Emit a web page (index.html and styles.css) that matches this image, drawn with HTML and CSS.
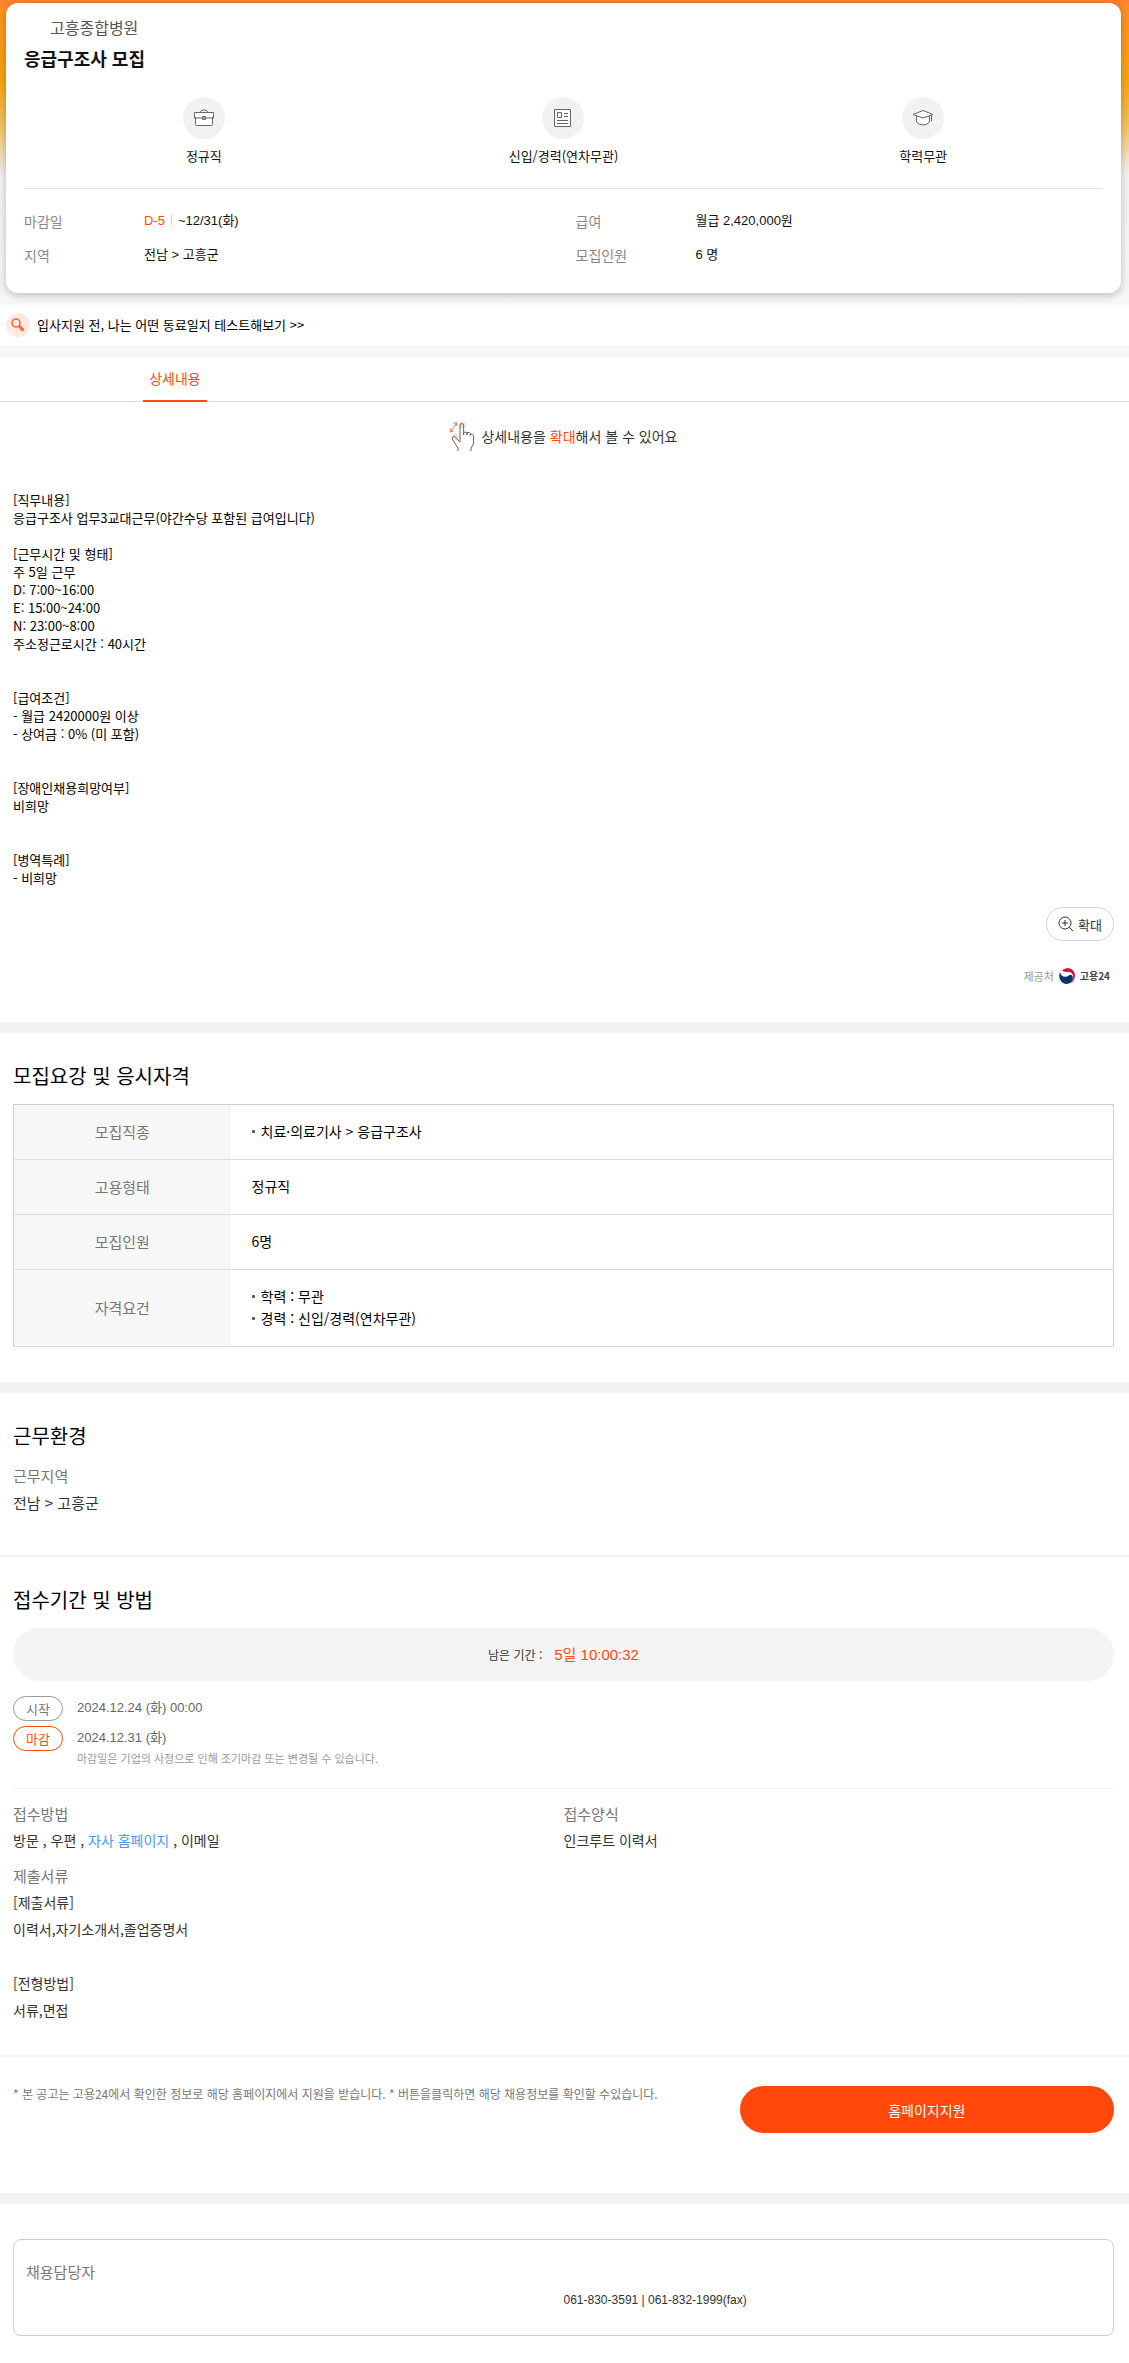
FILE: index.html
```html
<!DOCTYPE html>
<html lang="ko">
  <head>
    <meta charset="utf-8">
    <meta name="viewport" content="width=device-width, initial-scale=1">
    <title>응급구조사 모집 - 고흥종합병원</title>
    <link rel="stylesheet" href="styles.css">
  </head>
  <body>

    <header class="top">
      <div class="card">
        <p class="company">고흥종합병원</p>
        <h1>응급구조사 모집</h1>
        <ul class="keywords">
          <li>
            <span class="circle">
              <svg width="20" height="20" viewBox="0 0 20 20"><path d="M1.500 9v7.500q0 1 1 1h15q1 0 1-1v-7.500M.5 4.500h19v5.500h-19zM8.500 8.500h3v3h-3z"/><path d="M6.500 4.500q0-2.500 2.500-2.500h2q2.500 0 2.500 2.500" fill="none"/></svg>
            </span>
            정규직
          </li>
          <li>
            <span class="circle">
              <svg width="20" height="20" viewBox="0 0 20 20"><path d="M1.500 1.500h16v17h-16zM4.500 4.500h4v5h-4zM11 5.500h4M11 8.500h4M4 12.500h11M4 15.500h11"/></svg>
            </span>
            신입/경력(연차무관)
          </li>
          <li>
            <span class="circle">
              <svg width="22" height="20" viewBox="0 0 22 20"><path d="M4.500 8v6q2.500 3 6.500 3t6.500-3V8M11 2.500L21 6.500L11 10L1 6.500zM19.500 7.500v6"/></svg>
            </span>
            학력무관
          </li>
        </ul>
        <div class="summary">
          <dl>
            <dt>마감일</dt>
            <dd><span class="dday">D-5</span><span class="bar"></span>~12/31(화)</dd>
            <dt>지역</dt>
            <dd>전남 &gt; 고흥군</dd>
          </dl>
          <dl>
            <dt>급여</dt>
            <dd>월급 2,420,000원</dd>
            <dt>모집인원</dt>
            <dd>6 명</dd>
          </dl>
        </div>
      </div>
    </header>

    <a class="test" href="#">
      <span class="testIcon">
        <svg width="14" height="14" viewBox="0 0 14 14"><circle cx="5" cy="5" r="4"/><path d="M8 8L12.500 12.500" stroke-width="3"/></svg>
      </span>
      입사지원 전, 나는 어떤 동료일지 테스트해보기 &gt;&gt;
    </a>

    <nav class="tabs">
      <a class="on" href="#detail">상세내용</a>
    </nav>

    <section class="detail" id="detail">
      <p class="hint">
        <svg width="26" height="32" viewBox="0 0 26 32">
          <circle cx="13" cy="5" r="3.500" fill="#fbdccf"/>
          <circle cx="6" cy="17" r="3.500" fill="#fbdccf"/>
          <path d="M1.500 12L7.500 3M1.500 8.500V12l3-1M4.500 3.500l3-1v3.500" fill="none" stroke="#f47a4a"/>
          <path d="M9 31v-3L3.500 19.500q-1-2.500 1.500-3q1-.3 2 1.500l4 4V5.500q0-2 1.800-2t1.800 2V15V12.500q2.800-1 3.400.5v2V12.500q2.800-.5 3.400 1v2V14q2.600-.5 3.100 1.500V24L22 28v3" fill="none" stroke="#666"/>
        </svg>
        <span>상세내용을 <em>확대</em>해서 볼 수 있어요</span>
      </p>
      <div class="description">[직무내용]
응급구조사 업무3교대근무(야간수당 포함된 급여입니다)

[근무시간 및 형태]
주 5일 근무
D: 7:00~16:00
E: 15:00~24:00
N: 23:00~8:00
주소정근로시간 : 40시간


[급여조건]
- 월급 2420000원 이상
- 상여금 : 0% (미 포함)


[장애인채용희망여부]
비희망


[병역특례]
- 비희망</div>
      <button class="zoom" type="button">
        <svg width="16" height="16" viewBox="0 0 16 16"><circle cx="7" cy="7" r="6"/><path d="M4 7h6M7 4v6M11.300 11.300L15 15"/></svg>
        확대
      </button>
      <p class="provider">
        제공처
        <svg width="16" height="16" viewBox="0 0 16 16">
          <path d="M3 2.500Q5.500 0 9 0Q15 .8 16 7Q16 12 12 15.500Q14.800 11.500 14.300 8Q12.500 3.500 9 3.800Q5.500 4.500 3 2.500z" fill="#e4032e"/>
          <path d="M1 4Q2 8.500 6 8.800Q8.500 8.800 10 7.300Q12.800 6 13.700 8.500Q14.500 12 12 14.500Q8 17 4 15Q-1.500 11 1 4z" fill="#0c3467"/>
        </svg>
        <strong>고용24</strong>
      </p>
    </section>

    <section class="outline">
      <h2>모집요강 및 응시자격</h2>
      <table>
        <tr>
          <th scope="row">모집직종</th>
          <td><ul><li>치료·의료기사 &gt; 응급구조사</li></ul></td>
        </tr>
        <tr>
          <th scope="row">고용형태</th>
          <td>정규직</td>
        </tr>
        <tr>
          <th scope="row">모집인원</th>
          <td>6명</td>
        </tr>
        <tr>
          <th scope="row">자격요건</th>
          <td>
            <ul>
              <li>학력 : 무관</li>
              <li>경력 : 신입/경력(연차무관)</li>
            </ul>
          </td>
        </tr>
      </table>
    </section>

    <section class="place">
      <h2>근무환경</h2>
      <h3>근무지역</h3>
      <p>전남 &gt; 고흥군</p>
    </section>

    <section class="period">
      <h2>접수기간 및 방법</h2>
      <p class="remain"><span>남은 기간 :</span><strong>5일 10:00:32</strong></p>
      <ul class="dates">
        <li><span class="badge">시작</span><span class="date">2024.12.24 (화) 00:00</span></li>
        <li><span class="badge end">마감</span><span class="date">2024.12.31 (화)</span></li>
      </ul>
      <p class="notice">마감일은 기업의 사정으로 인해 조기마감 또는 변경될 수 있습니다.</p>
      <div class="how">
        <div>
          <h3>접수방법</h3>
          <p>방문 , 우편 , <a href="#">자사 홈페이지</a> , 이메일</p>
        </div>
        <div>
          <h3>접수양식</h3>
          <p>인크루트 이력서</p>
        </div>
      </div>
      <h3>제출서류</h3>
      <p>[제출서류]<br>이력서,자기소개서,졸업증명서<br><br>[전형방법]<br>서류,면접</p>
    </section>

    <section class="apply">
      <p>* 본 공고는 고용24에서 확인한 정보로 해당 홈페이지에서 지원을 받습니다. * 버튼을클릭하면 해당 채용정보를 확인할 수있습니다.</p>
      <button type="button">홈페이지지원</button>
    </section>

    <section class="contact">
      <div class="contactBox">
        <h3>채용담당자</h3>
        <p>061-830-3591 | 061-832-1999(fax)</p>
      </div>
    </section>

  </body>
</html>
```
FILE: styles.css
```css
* {
  box-sizing: border-box;
}
body {
  margin: 0;
  font-family: "Noto Sans CJK KR", sans-serif;
  font-size: 14px;
  color: #333;
  background: #fff;
}
h1, h2, h3, p, ul, dl, dd {
  margin: 0;
  padding: 0;
  font-weight: normal;
}
ul {
  list-style: none;
}
a {
  color: inherit;
  text-decoration: none;
}
em {
  font-style: normal;
  color: #ff4a0d;
}
svg {
  flex: none;
}
button {
  font-family: inherit;
  cursor: pointer;
}

/* top card */
.top {
  padding: 3px 8px 12px 6px;
  background: linear-gradient(#ff8230 3px, #ff9122 10px, #f8a60c 80px, #f3c262 125px, #f3f3f3 175px, #f7f7f7);
}
.card {
  height: 290px;
  padding: 12px 18px 0;
  background: #fff;
  border-radius: 12px;
  box-shadow: 0 2px 8px rgba(0, 0, 0, .25);
}
.company {
  padding-left: 26px;
  font-size: 16px;
  line-height: 24px;
  color: #555;
}
h1 {
  margin-top: 5px;
  font-size: 18px;
  font-weight: bold;
  line-height: 28px;
  color: #111;
}
.keywords {
  display: grid;
  grid-template-columns: repeat(3, 1fr);
  margin-top: 25px;
  padding-bottom: 22px;
  border-bottom: 1px solid #e0e0e0;
}
.keywords li {
  display: flex;
  flex-direction: column;
  align-items: center;
  gap: 6px;
  font-size: 13px;
  line-height: 21px;
  color: #111;
}
.circle {
  display: flex;
  align-items: center;
  justify-content: center;
  width: 42px;
  height: 42px;
  border-radius: 50%;
  background: #f1f1f1;
}
.circle svg {
  fill: #fff;
  stroke: #666;
}
.summary {
  display: grid;
  grid-template-columns: 1fr 1fr;
  gap: 24px;
  margin-top: 15px;
}
.summary dl {
  display: grid;
  grid-template-columns: 120px 1fr;
  line-height: 34px;
}
.summary dt {
  color: #888;
}
.summary dd {
  font-family: "Liberation Sans", "Noto Sans CJK KR", sans-serif;
  font-size: 13px;
  color: #111;
}
.dday {
  color: #ff4a0d;
}
.bar {
  display: inline-block;
  width: 1px;
  height: 10px;
  margin: 0 6px;
  background: #ccc;
}

/* banner and tabs */
.test {
  display: flex;
  align-items: center;
  gap: 7px;
  height: 40px;
  padding-left: 6px;
  font-size: 13px;
  line-height: 20px;
  color: #000;
}
.testIcon {
  display: flex;
  align-items: center;
  justify-content: center;
  width: 24px;
  height: 24px;
  border-radius: 50%;
  background: #ffe9e3;
}
.testIcon svg {
  fill: none;
  stroke: #f9602c;
  stroke-width: 1.5;
}
.tabs {
  display: flex;
  height: 57px;
  padding-left: 143px;
  border-top: 12px solid #f7f7f7;
  border-bottom: 1px solid #ddd;
}
.tabs a {
  width: 64px;
  height: 45px;
  line-height: 42px;
  text-align: center;
}
.tabs .on {
  color: #ff4a0d;
  border-bottom: 2px solid #ff4a0d;
}

/* detail */
section {
  padding: 0 15px 0 13px;
}
.detail {
  padding-top: 18px;
}
.hint {
  display: flex;
  align-items: center;
  justify-content: center;
  gap: 6px;
  height: 32px;
}
.description {
  margin-top: 39px;
  font-size: 13px;
  line-height: 18px;
  white-space: pre-line;
  color: #000;
}
.zoom {
  display: flex;
  align-items: center;
  gap: 4px;
  margin: 20px 0 0 auto;
  height: 34px;
  padding: 0 11px;
  font-size: 13px;
  color: #333;
  background: #fff;
  border: 1px solid #d5d5d5;
  border-radius: 17px;
}
.zoom svg {
  fill: none;
  stroke: #333;
}
.provider {
  display: flex;
  align-items: center;
  justify-content: flex-end;
  gap: 5px;
  margin-top: 25px;
  padding-right: 4px;
  font-size: 11px;
  line-height: 20px;
  color: #999;
}
.provider strong {
  font-size: 10px;
  color: #444;
}

/* recruit outline */
h2 {
  font-size: 20px;
  line-height: 28px;
  color: #000;
}
h3 {
  font-size: 15px;
  line-height: 26px;
  color: #777;
}
.outline, .place, .contact {
  border-top: 11px solid #f2f2f2;
}
.outline {
  margin-top: 36px;
  padding-top: 29px;
  padding-bottom: 35px;
}
table {
  width: 100%;
  margin-top: 14px;
  border: 1px solid #ccc;
  border-collapse: collapse;
}
tr {
  border-bottom: 1px solid #ddd;
}
th {
  width: 217px;
  padding: 0 0 2px;
  font-size: 15px;
  font-weight: normal;
  color: #777;
  background: #f7f7f7;
}
td {
  padding: 15px 21px 17px;
  line-height: 22px;
  color: #000;
}
td li {
  display: flex;
  align-items: center;
  gap: 6px;
}
td li::before {
  content: "";
  width: 3px;
  height: 3px;
  border-radius: 1px;
  background: #555;
}

/* place */
.place {
  padding-top: 29px;
  padding-bottom: 38px;
}
.place h3 {
  margin-top: 13px;
}
.place p {
  font-size: 15px;
  line-height: 28px;
}

/* period and method */
.period, .apply {
  border-top: 2px solid #f2f2f2;
}
.period {
  padding-top: 29px;
  padding-bottom: 31px;
}
.period p {
  line-height: 27px;
}
.period .remain {
  display: flex;
  align-items: center;
  justify-content: center;
  gap: 12px;
  height: 53px;
  margin-top: 14px;
  font-size: 12px;
  border-radius: 27px;
  background: #f4f4f4;
}
.remain strong {
  font-family: "Liberation Sans", "Noto Sans CJK KR", sans-serif;
  font-size: 15px;
  font-weight: normal;
  color: #ff4a0d;
}
.dates {
  display: grid;
  gap: 5px;
  margin-top: 15px;
}
.dates li {
  display: flex;
  gap: 14px;
  line-height: 23px;
}
.badge {
  width: 50px;
  font-size: 13px;
  text-align: center;
  color: #777;
  border: 1px solid #999;
  border-radius: 13px;
}
.end {
  color: #ff4a0d;
  border-color: #ff4a0d;
}
.date {
  font-family: "Liberation Sans", "Noto Sans CJK KR", sans-serif;
  font-size: 13px;
  color: #666;
}
.period .notice {
  padding-left: 64px;
  font-size: 11px;
  line-height: 15px;
  color: #999;
}
.how {
  display: grid;
  grid-template-columns: 1fr 1fr;
  margin-top: 22px;
  padding: 12px 0 9px;
  border-top: 1px solid #f2f2f2;
}
.how a {
  color: #4a97f7;
}

/* apply */
.apply {
  display: flex;
  justify-content: space-between;
  padding-top: 29px;
  padding-bottom: 60px;
}
.apply p {
  font-size: 12px;
  line-height: 16px;
  white-space: nowrap;
  color: #777;
}
.apply button {
  width: 34%;
  height: 47px;
  font-size: 14px;
  color: #fff;
  background: #ff480a;
  border: 0;
  border-radius: 24px;
}

/* contact */
.contact {
  padding-top: 35px;
  padding-bottom: 28px;
}
.contactBox {
  padding: 19px 12px;
  border: 1px solid #ccc;
  border-radius: 8px;
}
.contactBox p {
  margin-left: 50%;
  font-family: "Liberation Sans", "Noto Sans CJK KR", sans-serif;
  font-size: 12px;
  line-height: 31px;
}
```
